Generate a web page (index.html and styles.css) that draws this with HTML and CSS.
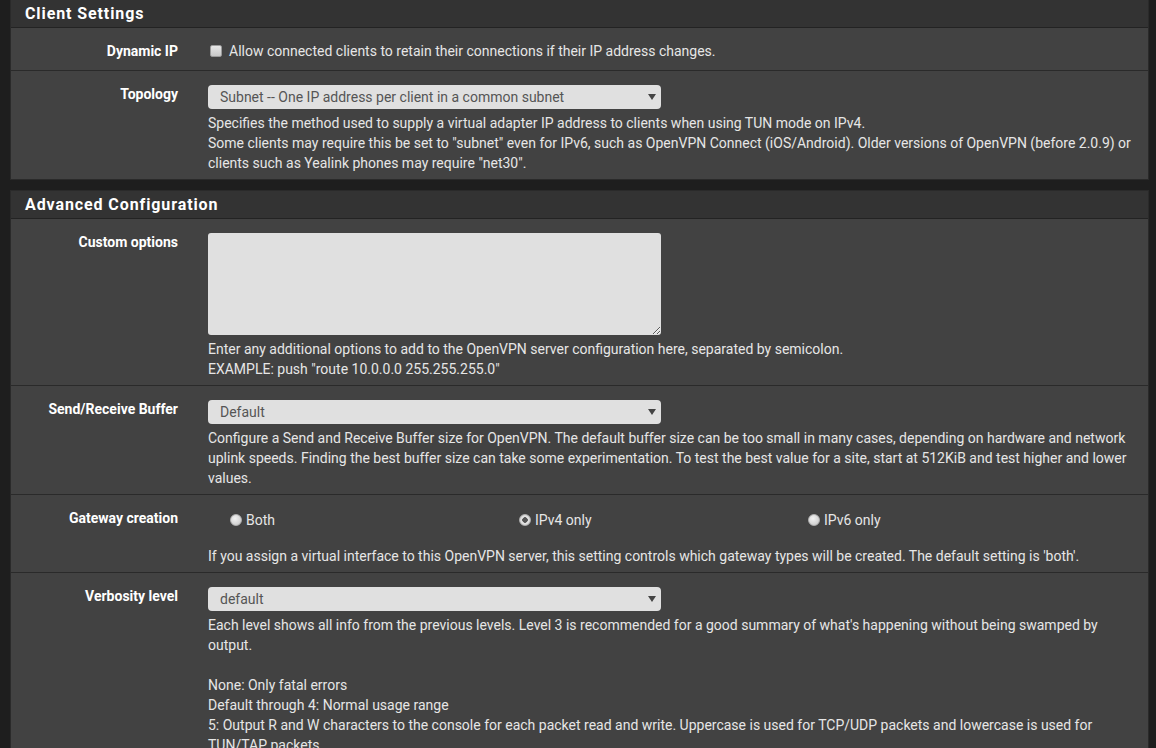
FILE: index.html
```html
<!DOCTYPE html>
<html lang="en">
<head>
    <meta charset="UTF-8">
    <meta name="viewport" content="width=device-width, initial-scale=1.0">
    <title>OpenVPN Server</title>
    <link rel="stylesheet" href="styles.css">
</head>
<body>

    <div class="panel panel-first">
        <div class="panel-heading">Client Settings</div>
        <div class="panel-body">
            <div class="form-group">
                <label class="control-label">Dynamic IP</label>
                <div class="field">
                    <label class="check-line">
                        <input type="checkbox" class="check">
                        Allow connected clients to retain their connections if their IP address changes.
                    </label>
                </div>
            </div>
            <div class="form-group">
                <label class="control-label">Topology</label>
                <div class="field">
                    <div class="select">Subnet -- One IP address per client in a common subnet</div>
                    <p class="help">
                        Specifies the method used to supply a virtual adapter IP address to clients when using TUN mode on IPv4.<br>
                        Some clients may require this be set to "subnet" even for IPv6, such as OpenVPN Connect (iOS/Android). Older versions of OpenVPN (before 2.0.9) or clients such as Yealink phones may require "net30".
                    </p>
                </div>
            </div>
        </div>
    </div>

    <div class="panel">
        <div class="panel-heading">Advanced Configuration</div>
        <div class="panel-body">
            <div class="form-group">
                <label class="control-label">Custom options</label>
                <div class="field">
                    <textarea class="textarea"></textarea>
                    <p class="help">
                        Enter any additional options to add to the OpenVPN server configuration here, separated by semicolon.<br>
                        EXAMPLE: push "route 10.0.0.0 255.255.255.0"
                    </p>
                </div>
            </div>
            <div class="form-group">
                <label class="control-label">Send/Receive Buffer</label>
                <div class="field">
                    <div class="select">Default</div>
                    <p class="help">
                        Configure a Send and Receive Buffer size for OpenVPN. The default buffer size can be too small in many cases, depending on hardware and network uplink speeds. Finding the best buffer size can take some experimentation. To test the best value for a site, start at 512KiB and test higher and lower values.
                    </p>
                </div>
            </div>
            <div class="form-group">
                <label class="control-label">Gateway creation</label>
                <div class="field">
                    <div class="radios">
                        <label class="radio-line"><input type="radio" name="gw" class="radio"> Both</label>
                        <label class="radio-line"><input type="radio" name="gw" class="radio" checked> IPv4 only</label>
                        <label class="radio-line"><input type="radio" name="gw" class="radio"> IPv6 only</label>
                    </div>
                    <p class="help">
                        If you assign a virtual interface to this OpenVPN server, this setting controls which gateway types will be created. The default setting is 'both'.
                    </p>
                </div>
            </div>
            <div class="form-group">
                <label class="control-label">Verbosity level</label>
                <div class="field">
                    <div class="select">default</div>
                    <p class="help">
                        Each level shows all info from the previous levels. Level 3 is recommended for a good summary of what's happening without being swamped by output.<br>
                        <br>
                        None: Only fatal errors<br>
                        Default through 4: Normal usage range<br>
                        5: Output R and W characters to the console for each packet read and write. Uppercase is used for TCP/UDP packets and lowercase is used for TUN/TAP packets.<br>
                        6-11: Debug info range
                    </p>
                </div>
            </div>
        </div>
    </div>

</body>
</html>
```

FILE: styles.css
```css
body {
    margin: 0;
    padding: 0 7px 0 10px;
    background-color: #1e1e1e;
    font-family: Roboto, "Liberation Sans", sans-serif;
    font-size: 14px;
    line-height: 20px;
    color: #e6e6e6;
    overflow: hidden;
    height: 748px;
}
.panel {
    background-color: #424242;
    border: 1px solid #2a2a2a;
    margin-bottom: 10px;
}
.panel-first {
    border-top: none;
}
.panel-heading {
    background-color: #333333;
    border-bottom: 1px solid #232323;
    color: #ffffff;
    font-weight: bold;
    font-size: 16px;
    letter-spacing: 0.9px;
    height: 27px;
    line-height: 28px;
    padding-left: 14px;
}
.form-group {
    display: grid;
    grid-template-columns: 182px 1fr;
    padding: 14px 0 6px;
    border-bottom: 1px solid #2a2a2a;
}
.form-group:last-child {
    border-bottom: none;
}
.control-label {
    text-align: right;
    padding-right: 15px;
    font-weight: bold;
    color: #ffffff;
    margin-top: -1px;
}
.field {
    padding: 0 15px;
}
.check-line {
    display: flex;
    align-items: center;
    height: 20px;
    margin-top: -1px;
    margin-bottom: 3px;
}
.check {
    appearance: none;
    width: 12px;
    height: 12px;
    margin: 0 7px 0 2px;
    background: linear-gradient(#e6e6e6, #c8c8c8);
    border: 1px solid #9a9a9a;
    border-radius: 2px;
}
.select {
    position: relative;
    width: 441px;
    height: 24px;
    line-height: 24px;
    padding-left: 12px;
    background-color: #e0e0e0;
    border-radius: 4px;
    color: #555555;
}
.select::after {
    content: "";
    position: absolute;
    right: 5px;
    top: 9px;
    border-left: 4px solid transparent;
    border-right: 4px solid transparent;
    border-top: 6px solid #444444;
}
.textarea {
    display: block;
    box-sizing: border-box;
    width: 453px;
    height: 102px;
    background-color: #e0e0e0;
    border: none;
    border-radius: 3px;
    margin: 0;
}
.help {
    margin: 4px 0 0;
    padding-right: 2px;
}
.radios {
    display: grid;
    grid-template-columns: 289px 289px 289px;
    padding-left: 22px;
    margin-bottom: 15px;
    height: 22px;
    align-items: center;
}
.radio-line {
    display: flex;
    align-items: center;
}
.radio {
    appearance: none;
    width: 12px;
    height: 12px;
    margin: 0 4px 0 0;
    border-radius: 50%;
    background: radial-gradient(circle at 40% 35%, #f2f2f2, #c4c4c4);
    border: 1px solid #b0b0b0;
    box-sizing: border-box;
}
.radio:checked {
    background: radial-gradient(circle, #555555 0 2.5px, #e6e6e6 3px, #c8c8c8 100%);
}
```
